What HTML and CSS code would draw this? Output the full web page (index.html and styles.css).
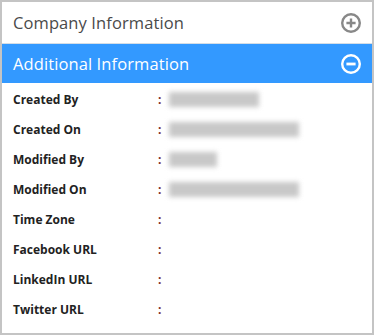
FILE: index.html
```html
<!DOCTYPE html>
<html>
<head>
<meta charset="utf-8">
<link rel="stylesheet" href="styles.css">
</head>
<body>
<div class="panel">
  <div class="head head-collapsed">
    <span class="head-title">Company Information</span>
    <svg class="head-icon" width="20" height="20" viewBox="0 0 20 20">
      <circle cx="10" cy="10" r="8.8" fill="none" stroke="#888" stroke-width="2.4"/>
      <path d="M10 5.4v9.2M5.4 10h9.2" stroke="#888" stroke-width="2.4"/>
    </svg>
  </div>
  <div class="head head-open">
    <span class="head-title">Additional Information</span>
    <svg class="head-icon" width="20" height="20" viewBox="0 0 20 20">
      <circle cx="10" cy="10" r="8.8" fill="none" stroke="#ffffff" stroke-width="2.4"/>
      <path d="M5.4 10h9.2" stroke="#ffffff" stroke-width="2.8"/>
    </svg>
  </div>
  <div class="rows">
    <div class="row"><span class="label">Created By</span><span class="colon">:</span><span class="blur" style="width:90px"></span></div>
    <div class="row"><span class="label">Created On</span><span class="colon">:</span><span class="blur" style="width:130px"></span></div>
    <div class="row"><span class="label">Modified By</span><span class="colon">:</span><span class="blur" style="width:48px"></span></div>
    <div class="row"><span class="label">Modified On</span><span class="colon">:</span><span class="blur" style="width:130px"></span></div>
    <div class="row"><span class="label">Time Zone</span><span class="colon">:</span></div>
    <div class="row"><span class="label">Facebook URL</span><span class="colon">:</span></div>
    <div class="row"><span class="label">LinkedIn URL</span><span class="colon">:</span></div>
    <div class="row"><span class="label">Twitter URL</span><span class="colon">:</span></div>
  </div>
</div>
</body>
</html>
```
FILE: styles.css
```css
html, body { margin: 0; padding: 0; background: #fff; }
.panel {
  width: 374px;
  height: 335px;
  box-sizing: border-box;
  border: 2px solid #c4c4c4;
  font-family: "Open Sans", "Noto Sans", sans-serif;
  overflow: hidden;
}
.head {
  display: flex;
  align-items: center;
  justify-content: space-between;
  padding: 0 11px 0 11px;
  box-sizing: border-box;
}
.head-collapsed {
  height: 42px;
  background: #fff;
  border-bottom: 1px solid #d4dde6;
  color: #4a4a4a;
}
.head-open {
  height: 39px;
  background: #3399ff;
  color: #fff;
}
.head-title { font-size: 16.5px; letter-spacing: 0.1px; }
.head-icon { display: block; }
.rows { padding-top: 1px; }
.row {
  height: 30px;
  display: flex;
  align-items: center;
  padding-left: 11px;
}
.label {
  width: 145px;
  font-size: 12px;
  font-weight: 700;
  color: #222;
}
.colon {
  width: 8px;
  font-size: 12px;
  font-weight: 700;
  color: #7a2b2b;
}
.blur {
  height: 15px;
  background: #c8c8c8;
  filter: blur(2.5px);
  margin-left: 3px;
}
```
